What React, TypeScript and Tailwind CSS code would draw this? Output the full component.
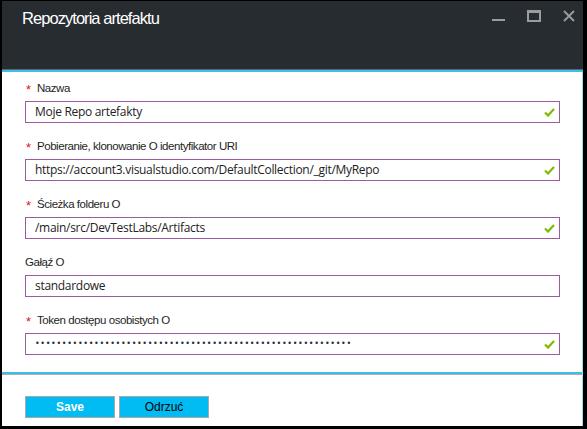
import React from 'react';

const fields = [
  { label: 'Nazwa', value: 'Moje Repo artefakty', required: true, valid: true },
  { label: 'Pobieranie, klonowanie O identyfikator URI', value: 'https://account3.visualstudio.com/DefaultCollection/_git/MyRepo', required: true, valid: true },
  { label: 'Ścieżka folderu O', value: '/main/src/DevTestLabs/Artifacts', required: true, valid: true },
  { label: 'Gałąź O', value: 'standardowe', required: false, valid: false },
  { label: 'Token dostępu osobistych O', value: '•'.repeat(59), required: true, valid: true, secret: true },
];

function Check() {
  return (
    <svg width="11" height="9" viewBox="0 0 11 9" className="shrink-0">
      <path d="M1 4.5 L4 7.5 L10 1" fill="none" stroke="#7fba00" strokeWidth="2.2" />
    </svg>
  );
}

export default function App() {
  return (
    <div className="w-[587px] h-[429px] bg-black pt-px pl-[2px] pr-[4px] pb-[3px] flex flex-col font-['Liberation_Sans',Arial,sans-serif]">
      {/* Nagłówek */}
      <div className="h-[69px] bg-[#272c31] flex items-start justify-between pl-[20px] pr-[8px] pt-[6px] border-b border-[#5d666e]">
        <div className="text-white text-[16.5px] tracking-[-0.95px] leading-[22px]">Repozytoria artefaktu</div>
        <div className="flex items-start gap-[22px] pt-[3px]">
          <svg width="13" height="12" viewBox="0 0 13 12"><rect x="0" y="9" width="13" height="2" fill="#9a9da0" /></svg>
          <svg width="14" height="12" viewBox="0 0 14 12"><rect x="1" y="1" width="12" height="10" fill="none" stroke="#9a9da0" strokeWidth="2" /><rect x="0" y="0" width="14" height="3" fill="#9a9da0" /></svg>
          <svg width="12" height="12" viewBox="0 0 12 12"><path d="M1 1 L11 11 M11 1 L1 11" stroke="#9a9da0" strokeWidth="1.8" /></svg>
        </div>
      </div>
      <div className="h-[2px] bg-[#3cc0e9]" />

      {/* Formularz */}
      <div className="flex-1 bg-white border-r border-[#9fdcf2] flex flex-col">
        <div className="pl-[23px] pr-[22px] pt-[9px] flex flex-col gap-[16px]">
          {fields.map((f) => (
            <div key={f.label} className="flex flex-col gap-[4px]">
              <div className="h-[16px] flex items-center text-[11.5px] tracking-[-0.45px] text-[#1e1e1e]">
                {f.required && <span className="text-[#e81123] text-[13px] w-[12px] pl-[1px] leading-none">*</span>}
                <span>{f.label}</span>
              </div>
              <div className="h-[22px] border border-[#9b5ba1] flex items-center justify-between pl-[9px] pr-[4px]">
                <span className={f.secret ? "text-[#203040] text-[8px] tracking-[0.65px] font-['DejaVu_Sans',sans-serif]" : "text-[12px] text-[#222] font-['Open_Sans',sans-serif] tracking-[-0.3px]"}>{f.value}</span>
                {f.valid && <Check />}
              </div>
            </div>
          ))}
        </div>
        <div className="mt-auto h-[3px] bg-[#3cc0e9] border-b border-[#a8b0b5]" />
        <div className="flex gap-[4px] pl-[23px] pt-[21px] pb-[8px]">
          <button type="button" className="w-[90px] h-[22px] bg-[#00bcf2] border border-[#a9a9a9] text-white font-bold text-[12px]">Save</button>
          <button type="button" className="w-[90px] h-[22px] bg-[#00bcf2] border border-[#a9a9a9] text-black text-[12px]">Odrzuć</button>
        </div>
      </div>
    </div>
  );
}
